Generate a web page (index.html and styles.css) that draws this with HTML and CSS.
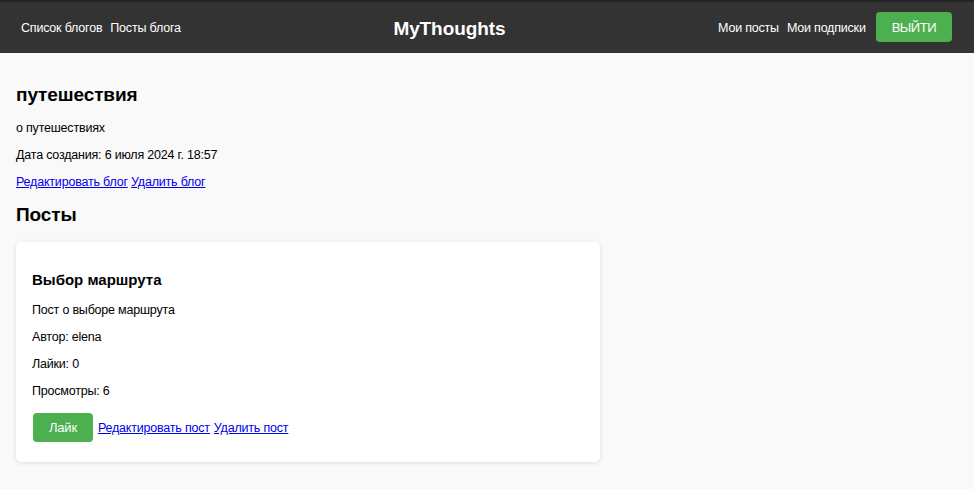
FILE: index.html
```html
<!DOCTYPE html>
<html lang="ru">
<head>
<meta charset="utf-8">
<title>MyThoughts</title>
<link rel="stylesheet" href="styles.css">
</head>
<body>
<header class="topbar">
  <nav class="nav nav-left">
    <a class="nav-link" href="#">Список блогов</a>
    <a class="nav-link" href="#">Посты блога</a>
  </nav>
  <div class="brand">MyThoughts</div>
  <nav class="nav nav-right">
    <a class="nav-link" href="#">Мои посты</a>
    <a class="nav-link" href="#">Мои подписки</a>
    <button class="btn btn-logout">ВЫЙТИ</button>
  </nav>
</header>
<main class="content">
  <h2 class="blog-title">путешествия</h2>
  <p class="text">о путешествиях</p>
  <p class="text">Дата создания: 6 июля 2024 г. 18:57</p>
  <p class="text links"><a href="#">Редактировать блог</a> <a href="#">Удалить блог</a></p>
  <h2 class="section-title">Посты</h2>
  <article class="card">
    <h3 class="card-title">Выбор маршрута</h3>
    <p class="text">Пост о выборе маршрута</p>
    <p class="text">Автор: elena</p>
    <p class="text">Лайки: 0</p>
    <p class="text">Просмотры: 6</p>
    <div class="actions">
      <button class="btn btn-like">Лайк</button>
      <a class="action-link" href="#">Редактировать пост</a>
      <a class="action-link" href="#">Удалить пост</a>
    </div>
  </article>
</main>
</body>
</html>
```
FILE: styles.css
```css
* { box-sizing: border-box; }
html, body { margin: 0; padding: 0; }
body {
  background: #f9f9f9;
  color: #000;
  font-family: "Liberation Sans", Arial, Helvetica, sans-serif;
  font-size: 12.5px;
  letter-spacing: -0.2px;
  line-height: 15px;
}
.topbar {
  display: flex;
  justify-content: space-between;
  align-items: center;
  height: 53px;
  padding: 1px 22px 0 21px;
  background: #333;
  border-top: 2px solid #232323;
}
.nav {
  display: flex;
  align-items: center;
  gap: 8px;
}
.nav-link {
  color: #fff;
  text-decoration: none;
}
.brand {
  color: #fff;
  font-size: 19px;
  letter-spacing: -0.1px;
  font-weight: bold;
  line-height: 23px;
}
.btn {
  font-family: inherit;
  border: none;
  border-radius: 4px;
  background: #4caf50;
  color: #fff;
  cursor: pointer;
}
.btn-logout {
  margin-left: 2px;
  height: 30px;
  padding: 0 16px;
  font-size: 13px;
  letter-spacing: -0.5px;
  margin-top: -2px;
}
.content {
  padding: 16px 16px;
}
.blog-title,
.section-title {
  font-size: 19px;
  letter-spacing: -0.1px;
  line-height: 23px;
  font-weight: bold;
  margin: 14px 0 15px;
}
.section-title { margin: 13px 0 16px; }
.text {
  margin: 12px 0;
}
.links a { color: #00e; }
.card {
  width: 584px;
  background: #fff;
  border-radius: 5px;
  box-shadow: 0 1px 4px rgba(0, 0, 0, 0.12);
  padding: 16px 16px 20px;
}
.card-title {
  font-size: 15px;
  letter-spacing: 0;
  line-height: 17px;
  font-weight: bold;
  margin: 13px 0 15px;
}
.actions {
  display: flex;
  align-items: baseline;
  margin-top: 14px;
}
.btn-like {
  margin-left: 1px;
  margin-right: 5px;
  height: 29px;
  padding: 0 16px;
  font-size: 13px;
  letter-spacing: -0.2px;
}
.action-link {
  color: #00e;
  margin-right: 4px;
}
```
